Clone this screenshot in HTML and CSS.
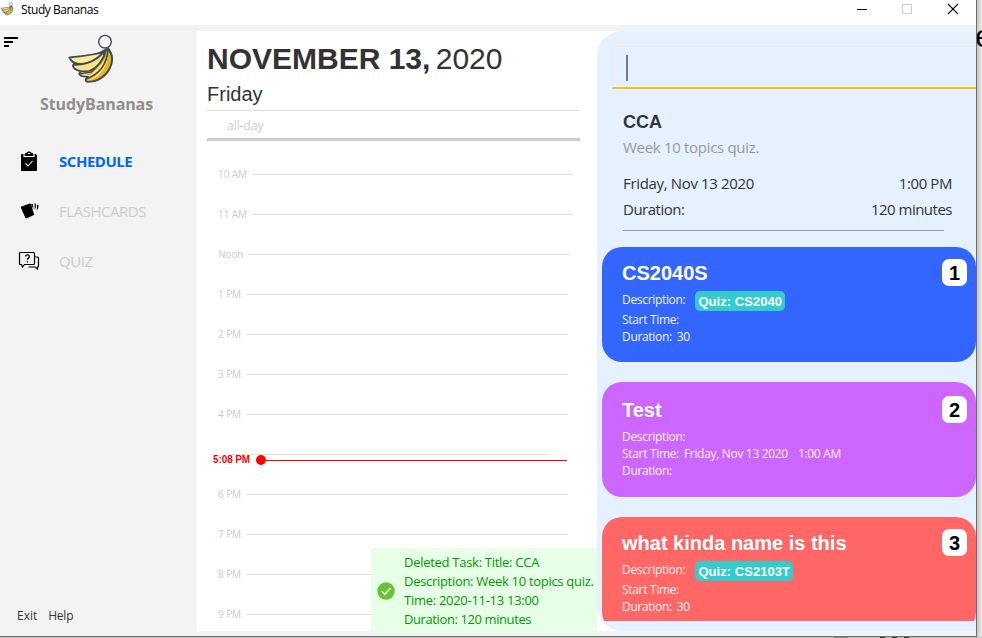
FILE: index.html
```
<!DOCTYPE html>
<html lang="en">
<head>
<meta charset="utf-8">
<title>Study Bananas</title>
<link rel="stylesheet" href="styles.css">
</head>
<body>
<svg class="defs" width="0" height="0" aria-hidden="true">
  <symbol id="bananas" viewBox="0 0 50 52">
    <g stroke="#3e4a55" stroke-width="1.7" stroke-linejoin="round" stroke-linecap="round">
      <path fill="#fdea9b" d="M41 15C32 21 22 23 3.500 23.500C5 27 7 29 10 30C7.500 30 6.500 31 7 32C8 35 11 37 17 37C14 38 12.500 39 13.500 40.500C15 42.500 18 43 22 42.500C20.500 44 19 45.500 20 46.500C28 49 38 45 43.500 35C47 28 47 21 43 15.500Z"/>
      <path fill="#ffeb9c" d="M38 18C30 21 18 21.500 3.500 23.500C6 29.500 14 31 21 29C28 27 34 22 38 18Z"/>
      <path fill="#fde287" d="M8 31C19 31 29 28 37 19L39 17C38 25 32 34 23 37C17 38 9 37 7 32Z"/>
      <path fill="#e2b51d" stroke="none" d="M42 16C41 24 34 34 24 41L20 42C28 36 36 27 40 16Z"/>
      <path fill="#e2b51d" d="M42 15.500C41 29 34 40 20 45C19 46.500 20 47.800 22 47.800C35 48 45 37 46 26C46 21 45 18 42 15.500Z"/>
      <path fill="#fde375" stroke="none" d="M42.300 22C40 33 32 42 21.500 46.300C31 46 41 35 42.300 22Z"/>
      <path fill="none" d="M40 16C38 26 32 32 25 38L14 40"/>
    </g>
    <circle cx="39" cy="7.700" r="6.300" fill="#f8f8f8" stroke="#3e4a55" stroke-width="1.400"/>
    <path d="M40 16L42 13.500L44 16Z" fill="#3e4a55" stroke="#3e4a55"/>
  </symbol>
</svg>

<div class="desktop">
  <div class="window">
    <header class="titlebar">
      <svg class="titlebar-icon"><use href="#bananas"/></svg>
      <span class="titlebar-name">Study Bananas</span>
      <svg class="window-controls" width="102" height="18" viewBox="0 0 102 18" fill="none">
        <path d="M1 9.500h10" stroke="#000"/>
        <rect x="46.500" y="4.500" width="9" height="9" stroke="#ccc"/>
        <path d="M92 4l10 10M102 4L92 14" stroke="#000" stroke-width="1.100"/>
      </svg>
    </header>

    <div class="app">
      <nav class="sidebar">
        <svg class="menu-icon" width="14" height="10" viewBox="0 0 14 10"><path d="M0 0h14v2H0zM0 4h9v2H0zM0 8h5v2H0z"/></svg>
        <svg class="logo" width="50" height="52"><use href="#bananas"/></svg>
        <div class="brand">StudyBananas</div>
        <ul class="menu">
          <li class="menu-item active">
            <svg width="22" height="22" viewBox="0 0 22 22"><path d="M4 4h3V3h1.500C9 1 13 1 13.500 3H15v1h2c1 0 2 .5 2 2v14c0 .7-.5 1-1 1H4c-.6 0-1-.4-1-1V5.500C3 4.700 3.300 4 4 4z"/><path d="M6 4v2.500h10V4M10 3.500h2M7.500 13.500l2.500 2.500 4.500-5" fill="none" stroke="#fff" stroke-width="1.100"/></svg>
            <span>SCHEDULE</span>
          </li>
          <li class="menu-item cards">
            <svg width="22" height="22" viewBox="0 0 22 22"><path d="M3.500 6.500l8-3c.7-.2 1.200 0 1.500.7L16 14c.2.700 0 1-.6 1.300l-6.500 3c-.8.300-1.300.1-1.600-.5L3 8c-.3-.7-.1-1.200.5-1.500zM13 4l2 .3.400 5zM16.500 3.500h1.300v4l-1 2zM19 4.500l1.500.8c.3 1.700-.5 3.700-1.700 5z"/></svg>
            <span>FLASHCARDS</span>
          </li>
          <li class="menu-item quiz">
            <svg width="22" height="22" viewBox="0 0 22 22" fill="none" stroke="#000" stroke-width="1.200"><path d="M2 2.500h13.500q1 0 1 1v10q0 1-1 1H6.500L4.500 17l-1-2.500H2q-.5 0-.5-1v-10q0-1 .5-1zM17 7h2.500q1 0 1 1v8q0 1-1 1v2L17 17h-6.500"/><path d="M7.500 6.500C8 4.300 11.500 4.500 11.300 6.600C11.200 8.200 9.400 8 9.400 10M9.400 11.300v1.300" stroke-width="1.300"/></svg>
            <span>QUIZ</span>
          </li>
        </ul>
        <footer class="sidebar-footer"><span class="exit">Exit</span><span class="help">Help</span></footer>
      </nav>

      <main class="calendar">
        <h1 class="date"><b>NOVEMBER 13,</b> <span>2020</span></h1>
        <div class="weekday">Friday</div>
        <div class="all-day">all-day</div>
        <div class="hours">
          <div class="hour"><span>10 AM</span><i></i></div>
          <div class="hour"><span>11 AM</span><i></i></div>
          <div class="hour"><span class="noon">Noon</span><i></i></div>
          <div class="hour"><span>1 PM</span><i></i></div>
          <div class="hour"><span>2 PM</span><i></i></div>
          <div class="hour"><span>3 PM</span><i></i></div>
          <div class="hour"><span>4 PM</span><i></i></div>
          <div class="hour current"><i></i>
            <div class="now"><span>5:08 PM</span><b></b><em></em></div>
          </div>
          <div class="hour"><span>6 PM</span><i></i></div>
          <div class="hour"><span>7 PM</span><i></i></div>
          <div class="hour"><span>8 PM</span><i></i></div>
          <div class="hour"><span>9 PM</span><i></i></div>
        </div>
      </main>

      <aside class="panel-wrap">
        <div class="panel">
          <div class="command"><span class="caret"></span></div>
          <section class="detail">
            <h2>CCA</h2>
            <p class="note">Week 10 topics quiz.</p>
            <div class="pair"><span class="day">Friday, Nov 13 2020</span><span class="time">1:00 PM</span></div>
            <div class="pair"><span>Duration:</span><span>120 minutes</span></div>
            <hr>
          </section>
          <div class="tasks">
            <article class="task blue">
              <div class="task-head"><h3>CS2040S</h3><span class="num">1</span></div>
              <div class="line tagged"><span>Description:</span><span class="tag">Quiz: CS2040</span></div>
              <div class="line"><span>Start Time:</span></div>
              <div class="line"><span>Duration:</span><span>30</span></div>
            </article>
            <article class="task purple">
              <div class="task-head"><h3>Test</h3><span class="num">2</span></div>
              <div class="line"><span>Description:</span></div>
              <div class="line"><span>Start Time:</span><span>Friday, Nov 13 2020</span><span class="hour-of">1:00 AM</span></div>
              <div class="line"><span>Duration:</span></div>
            </article>
            <article class="task red">
              <div class="task-head"><h3>what kinda name is this</h3><span class="num">3</span></div>
              <div class="line tagged"><span>Description:</span><span class="tag">Quiz: CS2103T</span></div>
              <div class="line"><span>Start Time:</span></div>
              <div class="line"><span>Duration:</span><span>30</span></div>
            </article>
          </div>
        </div>
      </aside>
    </div>

    <div class="toast">
      <svg width="18" height="18" viewBox="0 0 18 18"><circle cx="9" cy="9" r="8.700" fill="#67c23a"/><path d="M4.800 9.200l3 3 5.700-6" fill="none" stroke="#fff" stroke-width="1.400"/></svg>
      <div class="toast-text">
        <div class="wide">Deleted Task: Title: CCA</div>
        <div>Description: Week 10 topics quiz.</div>
        <div class="wide">Time: 2020-11-13 13:00</div>
        <div class="narrow">Duration: 120 minutes</div>
      </div>
    </div>
  </div>
  <div class="behind">e</div>
  <div class="behind-bottom"><i></i><b></b></div>
</div>
</body>
</html>
```
FILE: styles.css
```
* { box-sizing: border-box; }
body { margin: 0; font-family: "Open Sans", "Noto Sans", sans-serif; }
h1, h2, h3, p, ul { margin: 0; padding: 0; }
.defs { position: absolute; }

.desktop {
  display: grid;
  grid-template: 637px 1px / 977px 5px;
  width: 982px;
  height: 638px;
  overflow: hidden;
  background: #e6e6e6;
}
.window {
  position: relative;
  display: flex;
  flex-direction: column;
  border-right: 1px solid #707070;
  border-bottom: 1px solid #707070;
  background: #f3f3f3;
}
.behind {
  overflow: hidden;
  padding-top: 20px;
  background: linear-gradient(90deg, #c4c4c4, #e2e2e2 70%, #ebebeb);
  font: 32px/32px "Liberation Sans", sans-serif;
  text-indent: -2px;
}
.behind-bottom { grid-column: 1 / 3; display: flex; background: #bdbdbd; }
.behind-bottom i { width: 14px; margin-left: 834px; background: #888; }
.behind-bottom b { width: 36px; margin-left: 32px; background: repeating-linear-gradient(90deg, #333 0 5px, #bbb 5px 12px); }

.titlebar {
  display: flex;
  align-items: center;
  height: 25px;
  padding-bottom: 5px;
  background: #fff;
  flex: none;
}
.titlebar-icon { width: 14px; height: 14px; margin: -3px 7px 0 0; }
.titlebar-name { font-size: 12px; line-height: 20px; letter-spacing: -0.44px; }
.window-controls { margin: -2px 18px 0 auto; }

.app { display: flex; height: 606px; padding-top: 6px; flex: none; }

.sidebar {
  position: relative;
  display: flex;
  flex-direction: column;
  width: 197px;
  padding-top: 3px;
}
.menu-icon { position: absolute; left: 4px; top: 6px; }
.logo { margin-left: 66px; }
.brand {
  margin: 7px 0 0 40px;
  font-size: 16px;
  font-weight: 700;
  line-height: 22px;
  letter-spacing: -0.1px;
  color: #928e8b;
}
.menu { list-style: none; margin-top: 21px; }
.menu-item {
  display: flex;
  align-items: center;
  gap: 19px;
  height: 50px;
  padding-left: 18px;
  font-size: 15px;
  letter-spacing: -0.47px;
  color: #ccc;
}
.menu-item.active { color: #0066ff; font-weight: 700; }
.sidebar-footer {
  display: flex;
  gap: 11px;
  margin: auto 0 6px 17px;
  font-size: 12px;
  line-height: 18px;
  color: #333;
}
.help { letter-spacing: -0.24px; }

.calendar {
  width: 400px;
  height: 600px;
  padding: 10px 17px 0 10px;
  overflow: hidden;
  background: #fff;
  color: #333;
}
.date { height: 37px; font: 400 30px/36px "Liberation Sans", sans-serif; white-space: nowrap; }
.date span { margin-left: -3px; }
.weekday {
  width: 372px;
  height: 33px;
  padding-top: 4px;
  border-bottom: 1px solid #e0e0e0;
  font: 20px/24px "Liberation Sans", sans-serif;
}
.all-day {
  height: 30px;
  padding-left: 20px;
  border-bottom: 3px solid #ccc;
  font-size: 12px;
  line-height: 29px;
  color: #ccc;
}
.hours { padding-top: 13px; }
.hour {
  position: relative;
  display: flex;
  align-items: center;
  height: 40px;
  padding-left: 11px;
  font-size: 10px;
  letter-spacing: -0.08px;
  color: #ccc;
}
.hour > span { margin-top: -1px; }
.hour i { width: 321px; height: 1px; margin-left: 5px; background: #e0e0e0; }
.hour .noon { letter-spacing: -0.2px; }
.hour.current i { margin-left: 11px; }
.now {
  position: absolute;
  left: 6px;
  top: 21px;
  display: flex;
  align-items: center;
  height: 10px;
  color: #f00;
  font: 700 10px/10px "Liberation Sans", sans-serif;
}
.now span { width: 43px; letter-spacing: -0.1px; white-space: nowrap; }
.now b { width: 10px; height: 10px; border-radius: 50%; background: #f00; }
.now em { width: 301px; height: 1px; background: #f00; }

.panel-wrap { width: 379px; height: 600px; background: #fff; }
.panel {
  height: 600px;
  padding-top: 15px;
  border-radius: 25px 0 0 25px;
  background: #e5f1ff;
  overflow: hidden;
}
.command {
  height: 43px;
  margin-left: 15px;
  padding: 8px 0 0 13px;
  border: 1px solid #fbe6da;
  border-right: 0;
  border-bottom: 2px solid #f4c20d;
}
.caret { display: block; width: 2px; height: 26px; background: #737d87; }
.detail {
  height: 158px;
  padding: 21px 24px 0 26px;
  color: #333;
  font-size: 15px;
  line-height: 26px;
  letter-spacing: -0.5px;
}
.detail h2 { font: 700 18px/24px "Liberation Sans", sans-serif; letter-spacing: 0; }
.note { letter-spacing: -0.31px; color: #999; }
.pair { display: flex; justify-content: space-between; }
.note + .pair { margin-top: 10px; }
.day { letter-spacing: -0.34px; }
.time { letter-spacing: -0.42px; }
.detail hr { width: 321px; height: 1px; margin: 8px 0 0; border: 0; background: #999; }

.tasks { height: 374px; margin-left: 5px; overflow: hidden; }
.task {
  height: 115px;
  margin-bottom: 20px;
  padding: 12px 9px 0 20px;
  border-radius: 20px;
  color: #fff;
}
.blue { background: #3366ff; }
.purple { background: #cc66ff; padding-top: 14px; }
.red { background: #ff6666; }
.task-head { display: flex; justify-content: space-between; height: 27px; margin-bottom: 5px; }
.task h3 { font: 700 20px/28px "Liberation Sans", sans-serif; }
.num {
  width: 25px;
  border-radius: 7px;
  background: #fff;
  color: #000;
  font: 700 20px/28px "Liberation Sans", sans-serif;
  text-align: center;
}
.line {
  display: flex;
  gap: 5px;
  height: 17px;
  font-size: 12px;
  line-height: 17px;
  letter-spacing: -0.32px;
}
.line span { opacity: 0.93; }
.line .hour-of { margin-left: 5px; }
.line.tagged { gap: 10px; height: 20px; }
.line .tag {
  height: 20px;
  padding: 0 3px;
  border-radius: 5px;
  background: #33cccc;
  font: 700 13px/21px "Liberation Sans", sans-serif;
  letter-spacing: 0.05px;
  opacity: 1;
}

.toast {
  position: absolute;
  left: 371px;
  top: 548px;
  display: flex;
  align-items: center;
  width: 226px;
  height: 85px;
  padding: 1px 0 0 6px;
  border-radius: 4px;
  background: #e6ffe6;
  color: #009900;
  font-size: 13px;
  line-height: 19px;
  letter-spacing: -0.3px;
  white-space: nowrap;
}
.toast-text { margin: -11px 0 -11px 9px; }
.wide { letter-spacing: -0.28px; }
.narrow { letter-spacing: -0.4px; }
```
